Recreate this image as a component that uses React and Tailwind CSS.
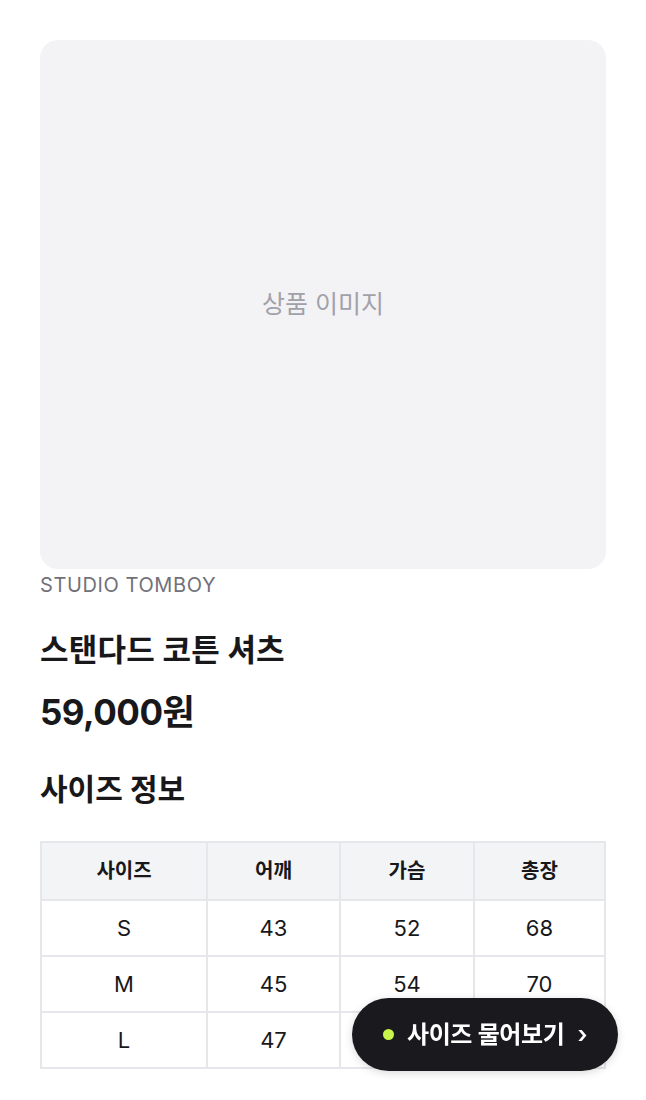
const SIZES = [
  { size: 'S', shoulder: 43, chest: 52, length: 68 },
  { size: 'M', shoulder: 45, chest: 54, length: 70 },
  { size: 'L', shoulder: 47, chest: 56, length: 72 },
];

const FONT = 'font-["Inter","Noto_Sans_CJK_KR",sans-serif]';

export default function App() {
  return (
    <div className={`min-h-screen bg-white px-10 pt-10 pb-6 text-[#18181b] ${FONT}`}>
      {/* Product image placeholder */}
      <div className="h-[529px] rounded-[18px] bg-[#f3f3f5] flex items-center justify-center">
        <span className="text-[25px] text-[#a1a1aa]">상품 이미지</span>
      </div>

      <p className="mt-[2px] text-[20px] leading-[28px] tracking-[0.6px] text-[#71717a]">STUDIO TOMBOY</p>
      <h1 className="mt-[34px] text-[31px] leading-[34px] font-bold tracking-[0.2px]">스탠다드 코튼 셔츠</h1>
      <p className="mt-[25px] text-[35px] leading-[40px] font-bold tracking-[-0.5px]">59,000원</p>
      <h2 className="mt-[40px] text-[30px] leading-[34px] font-bold">사이즈 정보</h2>

      {/* Size table */}
      <table className="mt-[35px] w-full border-collapse text-center table-fixed">
        <colgroup>
          <col className="w-[166px]" />
          <col className="w-[133px]" />
          <col className="w-[134px]" />
          <col />
        </colgroup>
        <thead>
          <tr className="bg-[#f3f4f6] h-[58px]">
            {['사이즈', '어깨', '가슴', '총장'].map((h) => (
              <th key={h} className="border-2 border-[#e5e7eb] text-[20px] font-bold">{h}</th>
            ))}
          </tr>
        </thead>
        <tbody>
          {SIZES.map((r) => (
            <tr key={r.size} className="h-[56px]">
              <td className="border-2 border-[#e5e7eb] text-[22px]">{r.size}</td>
              <td className="border-2 border-[#e5e7eb] text-[22px]">{r.shoulder}</td>
              <td className="border-2 border-[#e5e7eb] text-[22px]">{r.chest}</td>
              <td className="border-2 border-[#e5e7eb] text-[22px]">{r.length}</td>
            </tr>
          ))}
        </tbody>
      </table>

      {/* Floating size question button */}
      <button className="fixed right-[28px] bottom-[29px] h-[73px] w-[266px] rounded-full bg-[#1a191e] flex items-center pl-[31px] gap-[13px] text-white shadow-[0_2px_8px_rgba(0,0,0,0.15)]">
        <span className="w-[11px] h-[11px] rounded-full bg-[#c8f54a]" />
        <span className="text-[24px] font-semibold tracking-[-0.4px]">사이즈 물어보기</span>
        <span className="text-[24px] font-semibold leading-none">›</span>
      </button>
    </div>
  );
}
